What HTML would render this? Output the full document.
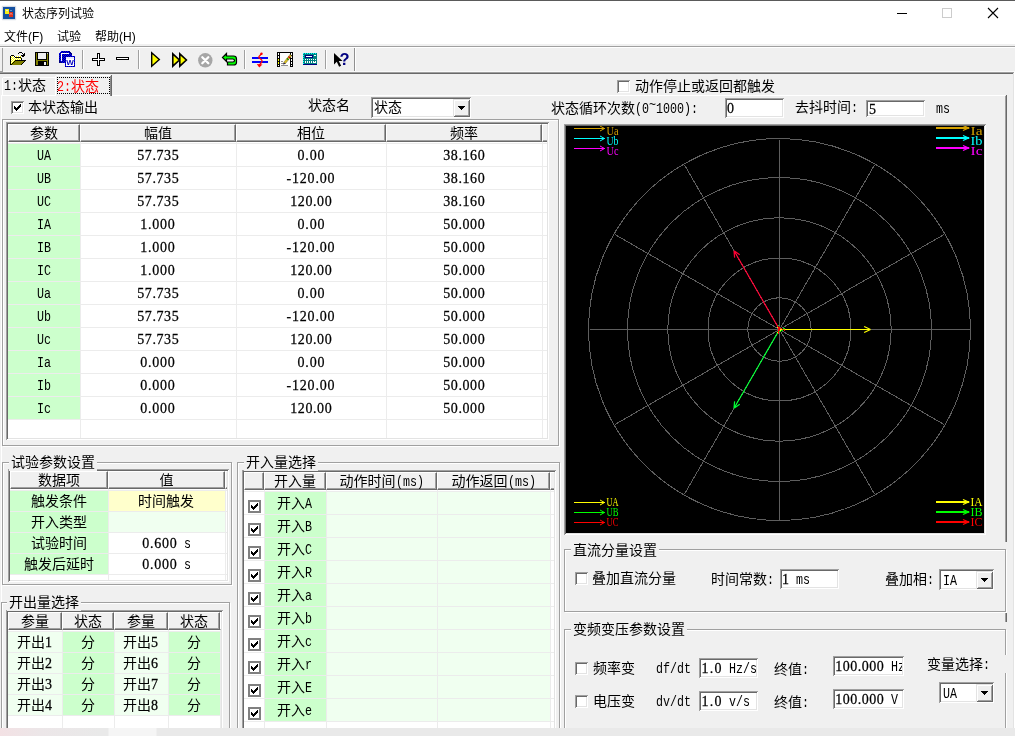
<!DOCTYPE html>
<html lang="zh-CN"><head><meta charset="utf-8"><title>状态序列试验</title>
<style>
html,body{margin:0;padding:0;background:#f0f0f0;overflow:hidden}
#win{position:relative;width:1015px;height:736px;background:#f0f0f0;overflow:hidden;font:14px/14px "Liberation Mono","Noto Sans CJK SC",monospace;color:#000;will-change:transform}
#win div,#win i,#win svg.a{position:absolute;display:block}
.t{white-space:pre;font:14px/14px "Liberation Mono","Noto Sans CJK SC",monospace}
.s{white-space:pre;font:12px/14px "Liberation Sans","Noto Sans CJK SC",sans-serif}
.l{display:inline-block;transform:scaleX(.8333);transform-origin:0 50%;white-space:pre}
.gb{box-sizing:border-box;border:1px solid #a0a0a0;box-shadow:1px 1px 0 #fff,inset 1px 1px 0 #fff}
.hd{box-sizing:border-box;background:#f0f0f0;border-top:1px solid #fff;border-left:1px solid #fff;border-right:1px solid #696969;border-bottom:1px solid #696969;box-shadow:inset -1px -1px 0 #a0a0a0;text-align:center;white-space:pre;font:14px/14px "Liberation Mono","Noto Sans CJK SC",monospace;overflow:hidden;padding-top:2px}
.cb{width:13px;height:13px;box-sizing:border-box;background:#fff;box-shadow:inset 1px 1px 0 #a0a0a0,inset -1px -1px 0 #fff,inset 2px 2px 0 #696969,inset -2px -2px 0 #e3e3e3}
.cbf{width:13px;height:13px;box-sizing:border-box;background:#fff;box-shadow:inset 0 0 0 2px #808080}
.btn{box-sizing:border-box;background:#f0f0f0;box-shadow:inset 1px 1px 0 #e3e3e3,inset -1px -1px 0 #696969,inset 2px 2px 0 #fff,inset -2px -2px 0 #a0a0a0}
.c{text-align:center;white-space:pre}
.n{-webkit-text-stroke:.25px #000;display:inline-block;transform:scaleY(1.08);transform-origin:0 84%;font-family:"Liberation Serif","Noto Sans CJK SC",serif;white-space:pre}

</style></head><body>
<div id="win">
<div style="left:0px;top:0px;width:1015px;height:44px;background:#fff"></div>
<i style="left:0px;top:0px;width:1015px;height:1px;background:#5a5a5a"></i>
<svg class="a" style="left:1px;top:5px" width="16" height="16" viewBox="0 0 16 16"><rect x="0.5" y="0.5" width="15" height="15" rx="1.5" fill="#eef0f4"/><rect x="1" y="1" width="14" height="14" rx="1" fill="#d5dae3"/><rect x="2" y="2" width="12" height="12" fill="#1450a0"/><rect x="4" y="4" width="4" height="5" fill="#f6ee18"/><rect x="8" y="7" width="4" height="5" fill="#e0301c"/><path d="M5 5.500h2M9.500 5l1 1M9 9.500l1-1 1 1" stroke="#e8f0ff" stroke-width=".8" fill="none"/></svg>
<div class="s" style="left:22px;top:7px">状态序列试验</div>
<i style="left:897px;top:13px;width:10px;height:1px;background:#000"></i>
<div style="left:942px;top:8px;width:10px;height:10px;border:1px solid #ccc;box-sizing:border-box"></div>
<svg class="a" style="left:987px;top:7px" width="12" height="12" viewBox="0 0 12 12"><path d="M1 1l10 10M11 1L1 11" stroke="#000" stroke-width="1.1" fill="none"/></svg>
<div class="s" style="left:4px;top:30px">文件(F)</div>
<div class="s" style="left:57px;top:30px">试验</div>
<div class="s" style="left:95px;top:30px">帮助(H)</div>
<i style="left:0px;top:46px;width:1015px;height:1px;background:#a0a0a0"></i>
<i style="left:0px;top:47px;width:1015px;height:1px;background:#fff"></i>
<i style="left:0px;top:72px;width:1015px;height:1px;background:#a0a0a0"></i>
<i style="left:0px;top:73px;width:1015px;height:1px;background:#696969"></i>
<i style="left:2px;top:48px;width:1px;height:24px;background:#a0a0a0"></i>
<i style="left:0px;top:71px;width:3px;height:1px;background:#a0a0a0"></i>
<i style="left:3px;top:71px;width:1012px;height:1px;background:#fafafa"></i>
<i style="left:354px;top:48px;width:1px;height:23px;background:#909090"></i>
<i style="left:355px;top:48px;width:1px;height:23px;background:#fff"></i>
<i style="left:82px;top:50px;width:1px;height:19px;background:#a0a0a0"></i>
<i style="left:83px;top:50px;width:1px;height:19px;background:#fff"></i>
<i style="left:138px;top:50px;width:1px;height:19px;background:#a0a0a0"></i>
<i style="left:139px;top:50px;width:1px;height:19px;background:#fff"></i>
<i style="left:244px;top:50px;width:1px;height:19px;background:#a0a0a0"></i>
<i style="left:245px;top:50px;width:1px;height:19px;background:#fff"></i>
<i style="left:325px;top:50px;width:1px;height:19px;background:#a0a0a0"></i>
<i style="left:326px;top:50px;width:1px;height:19px;background:#fff"></i>
<svg class="a" style="left:10px;top:52px" width="16" height="13" viewBox="0 0 16 13" shape-rendering="crispEdges"><path d="M1 4h10v8h-10z" fill="#ffffff"/><rect x="2" y="4" width="1" height="1" fill="#ffff00"/><rect x="4" y="4" width="1" height="1" fill="#ffff00"/><rect x="6" y="4" width="1" height="1" fill="#ffff00"/><rect x="8" y="4" width="1" height="1" fill="#ffff00"/><rect x="10" y="4" width="1" height="1" fill="#ffff00"/><rect x="1" y="5" width="1" height="1" fill="#ffff00"/><rect x="3" y="5" width="1" height="1" fill="#ffff00"/><rect x="5" y="5" width="1" height="1" fill="#ffff00"/><rect x="7" y="5" width="1" height="1" fill="#ffff00"/><rect x="9" y="5" width="1" height="1" fill="#ffff00"/><rect x="2" y="6" width="1" height="1" fill="#ffff00"/><rect x="4" y="6" width="1" height="1" fill="#ffff00"/><rect x="6" y="6" width="1" height="1" fill="#ffff00"/><rect x="8" y="6" width="1" height="1" fill="#ffff00"/><rect x="10" y="6" width="1" height="1" fill="#ffff00"/><rect x="1" y="7" width="1" height="1" fill="#ffff00"/><rect x="3" y="7" width="1" height="1" fill="#ffff00"/><rect x="5" y="7" width="1" height="1" fill="#ffff00"/><rect x="7" y="7" width="1" height="1" fill="#ffff00"/><rect x="9" y="7" width="1" height="1" fill="#ffff00"/><rect x="2" y="8" width="1" height="1" fill="#ffff00"/><rect x="4" y="8" width="1" height="1" fill="#ffff00"/><rect x="6" y="8" width="1" height="1" fill="#ffff00"/><rect x="8" y="8" width="1" height="1" fill="#ffff00"/><rect x="10" y="8" width="1" height="1" fill="#ffff00"/><rect x="1" y="9" width="1" height="1" fill="#ffff00"/><rect x="3" y="9" width="1" height="1" fill="#ffff00"/><rect x="5" y="9" width="1" height="1" fill="#ffff00"/><rect x="7" y="9" width="1" height="1" fill="#ffff00"/><rect x="9" y="9" width="1" height="1" fill="#ffff00"/><rect x="2" y="10" width="1" height="1" fill="#ffff00"/><rect x="4" y="10" width="1" height="1" fill="#ffff00"/><rect x="6" y="10" width="1" height="1" fill="#ffff00"/><rect x="8" y="10" width="1" height="1" fill="#ffff00"/><rect x="10" y="10" width="1" height="1" fill="#ffff00"/><rect x="1" y="11" width="1" height="1" fill="#ffff00"/><rect x="3" y="11" width="1" height="1" fill="#ffff00"/><rect x="5" y="11" width="1" height="1" fill="#ffff00"/><rect x="7" y="11" width="1" height="1" fill="#ffff00"/><rect x="9" y="11" width="1" height="1" fill="#ffff00"/><path d="M1 3h3v1h-3zM0 4h1v9h-1zM4 4h1v1h-1zM5 5h6v1h-6zM11 6h1v2h-1zM0 12h11v1h-11z" fill="#000"/><path d="M5 8h11l-5 5h-10z" fill="#808000"/><path d="M5 8h11v1h-11zM14 9h1v1h-1zM13 10h1v1h-1zM12 11h1v1h-1zM11 12h1v1h-1zM4 9h1v1h-1zM3 10h1v1h-1zM2 11h1v1h-1zM1 12h1v1h-1z" fill="#000"/><path d="M9 0h3v1h-3zM8 1h1v1h-1zM12 1h1v1h-1zM13 2h1v2h-1zM11 3h4v1h-4zM14 1h1v2h-1zM12 4h2v1h-2z" fill="#000"/></svg>
<svg class="a" style="left:35px;top:52px" width="14" height="14" viewBox="0 0 14 14" shape-rendering="crispEdges"><path d="M0 0h14v14h-14z" fill="#000"/><path d="M1 1h12v12h-12z" fill="#808000"/><path d="M3 1h8v6h-8z" fill="#f0f0f0"/><path d="M2 1h1v7h-1zM11 1h1v7h-1zM2 7h10v1h-10z" fill="#000"/><path d="M3 9h9v4h-9z" fill="#000"/><path d="M9 10h2v3h-2z" fill="#f0f0f0"/><path d="M12 1h1v1h-1z" fill="#c0c0c0"/></svg>
<svg class="a" style="left:59px;top:51px" width="16" height="16" viewBox="0 0 16 16" shape-rendering="crispEdges"><path d="M2 0h8l3 3v9h-13v-10z" fill="#000080"/><rect x="2" y="0" width="1" height="1" fill="#0000ff"/><rect x="4" y="0" width="1" height="1" fill="#0000ff"/><rect x="6" y="0" width="1" height="1" fill="#0000ff"/><rect x="8" y="0" width="1" height="1" fill="#0000ff"/><rect x="1" y="1" width="1" height="1" fill="#0000ff"/><rect x="3" y="1" width="1" height="1" fill="#0000ff"/><rect x="5" y="1" width="1" height="1" fill="#0000ff"/><rect x="7" y="1" width="1" height="1" fill="#0000ff"/><rect x="9" y="1" width="1" height="1" fill="#0000ff"/><rect x="0" y="2" width="1" height="1" fill="#0000ff"/><rect x="2" y="2" width="1" height="1" fill="#0000ff"/><rect x="4" y="2" width="1" height="1" fill="#0000ff"/><rect x="6" y="2" width="1" height="1" fill="#0000ff"/><rect x="8" y="2" width="1" height="1" fill="#0000ff"/><rect x="10" y="2" width="1" height="1" fill="#0000ff"/><rect x="1" y="3" width="1" height="1" fill="#0000ff"/><rect x="3" y="3" width="1" height="1" fill="#0000ff"/><rect x="5" y="3" width="1" height="1" fill="#0000ff"/><rect x="7" y="3" width="1" height="1" fill="#0000ff"/><rect x="9" y="3" width="1" height="1" fill="#0000ff"/><rect x="11" y="3" width="1" height="1" fill="#0000ff"/><rect x="0" y="4" width="1" height="1" fill="#0000ff"/><rect x="2" y="4" width="1" height="1" fill="#0000ff"/><rect x="4" y="4" width="1" height="1" fill="#0000ff"/><rect x="6" y="4" width="1" height="1" fill="#0000ff"/><rect x="8" y="4" width="1" height="1" fill="#0000ff"/><rect x="10" y="4" width="1" height="1" fill="#0000ff"/><rect x="12" y="4" width="1" height="1" fill="#0000ff"/><rect x="1" y="5" width="1" height="1" fill="#0000ff"/><rect x="3" y="5" width="1" height="1" fill="#0000ff"/><rect x="5" y="5" width="1" height="1" fill="#0000ff"/><rect x="7" y="5" width="1" height="1" fill="#0000ff"/><rect x="9" y="5" width="1" height="1" fill="#0000ff"/><rect x="11" y="5" width="1" height="1" fill="#0000ff"/><rect x="0" y="6" width="1" height="1" fill="#0000ff"/><rect x="2" y="6" width="1" height="1" fill="#0000ff"/><rect x="4" y="6" width="1" height="1" fill="#0000ff"/><rect x="6" y="6" width="1" height="1" fill="#0000ff"/><rect x="8" y="6" width="1" height="1" fill="#0000ff"/><rect x="10" y="6" width="1" height="1" fill="#0000ff"/><rect x="12" y="6" width="1" height="1" fill="#0000ff"/><rect x="1" y="7" width="1" height="1" fill="#0000ff"/><rect x="3" y="7" width="1" height="1" fill="#0000ff"/><rect x="5" y="7" width="1" height="1" fill="#0000ff"/><rect x="7" y="7" width="1" height="1" fill="#0000ff"/><rect x="9" y="7" width="1" height="1" fill="#0000ff"/><rect x="11" y="7" width="1" height="1" fill="#0000ff"/><rect x="0" y="8" width="1" height="1" fill="#0000ff"/><rect x="2" y="8" width="1" height="1" fill="#0000ff"/><rect x="4" y="8" width="1" height="1" fill="#0000ff"/><rect x="6" y="8" width="1" height="1" fill="#0000ff"/><rect x="8" y="8" width="1" height="1" fill="#0000ff"/><rect x="10" y="8" width="1" height="1" fill="#0000ff"/><rect x="12" y="8" width="1" height="1" fill="#0000ff"/><rect x="1" y="9" width="1" height="1" fill="#0000ff"/><rect x="3" y="9" width="1" height="1" fill="#0000ff"/><rect x="5" y="9" width="1" height="1" fill="#0000ff"/><rect x="7" y="9" width="1" height="1" fill="#0000ff"/><rect x="9" y="9" width="1" height="1" fill="#0000ff"/><rect x="11" y="9" width="1" height="1" fill="#0000ff"/><rect x="2" y="10" width="1" height="1" fill="#0000ff"/><rect x="4" y="10" width="1" height="1" fill="#0000ff"/><rect x="6" y="10" width="1" height="1" fill="#0000ff"/><rect x="8" y="10" width="1" height="1" fill="#0000ff"/><rect x="10" y="10" width="1" height="1" fill="#0000ff"/><rect x="12" y="10" width="1" height="1" fill="#0000ff"/><rect x="3" y="11" width="1" height="1" fill="#0000ff"/><rect x="5" y="11" width="1" height="1" fill="#0000ff"/><rect x="7" y="11" width="1" height="1" fill="#0000ff"/><rect x="9" y="11" width="1" height="1" fill="#0000ff"/><rect x="11" y="11" width="1" height="1" fill="#0000ff"/><path d="M2 2h8v1h-8zM2 2h1v8h-1z" fill="#ffffff"/><path d="M6 5h10v11h-10z" fill="#0000ff"/><path d="M7 6h8v9h-8z" fill="#ffffff"/><path d="M7 6h8v2h-8z" fill="#e8e8ff"/><rect x="6" y="5" width="1" height="1" fill="#000080"/><rect x="8" y="5" width="1" height="1" fill="#000080"/><rect x="10" y="5" width="1" height="1" fill="#000080"/><rect x="12" y="5" width="1" height="1" fill="#000080"/><rect x="14" y="5" width="1" height="1" fill="#000080"/><rect x="15" y="6" width="1" height="1" fill="#000080"/><rect x="15" y="8" width="1" height="1" fill="#000080"/><rect x="15" y="10" width="1" height="1" fill="#000080"/><rect x="15" y="12" width="1" height="1" fill="#000080"/><rect x="15" y="14" width="1" height="1" fill="#000080"/><rect x="6" y="7" width="1" height="1" fill="#000080"/><rect x="6" y="9" width="1" height="1" fill="#000080"/><rect x="6" y="11" width="1" height="1" fill="#000080"/><rect x="6" y="13" width="1" height="1" fill="#000080"/><rect x="6" y="15" width="1" height="1" fill="#000080"/><rect x="8" y="15" width="1" height="1" fill="#000080"/><rect x="10" y="15" width="1" height="1" fill="#000080"/><rect x="12" y="15" width="1" height="1" fill="#000080"/><rect x="14" y="15" width="1" height="1" fill="#000080"/><text x="11" y="14" text-anchor="middle" font-family="Liberation Sans,sans-serif" font-weight="bold" font-size="8" fill="#0000c0" shape-rendering="auto">W</text></svg>
<svg class="a" style="left:92px;top:53px" width="13" height="13" viewBox="0 0 13 13" shape-rendering="crispEdges"><path d="M5 0h3v13h-3zM0 5h13v3h-13z" fill="#000"/><path d="M6 1h1v11h-1zM1 6h11v1h-11z" fill="#fff"/></svg>
<svg class="a" style="left:116px;top:57px" width="13" height="3" viewBox="0 0 13 3" shape-rendering="crispEdges"><path d="M0 0h13v3h-13z" fill="#000"/><path d="M1 1h11v1h-11z" fill="#fff"/></svg>
<svg class="a" style="left:150px;top:51px" width="12" height="17" viewBox="0 0 12 17"><path d="M1.7 1.8v13.4l7.6-6.7z" fill="#ffff00" stroke="#000" stroke-width="1.4" stroke-linejoin="miter"/></svg>
<svg class="a" style="left:171px;top:52px" width="18" height="16" viewBox="0 0 18 16"><path d="M1.8 1.8v12.4l6.6-6.2z" fill="#ffff00" stroke="#000" stroke-width="1.6"/><path d="M8.8 1.8v12.4l6.6-6.2z" fill="#ffff00" stroke="#000" stroke-width="1.6"/></svg>
<svg class="a" style="left:197px;top:52px" width="17" height="17" viewBox="0 0 17 17"><circle cx="8.3" cy="8.3" r="7.2" fill="#a6a6a6"/><path d="M5.3 5.3l6 6M11.3 5.3l-6 6" stroke="#fff" stroke-width="2.3" stroke-linecap="round"/></svg>
<svg class="a" style="left:221px;top:52px" width="17" height="15" viewBox="0 0 17 15"><path d="M5.5 1.5L1.5 5.5 5.5 9.5V7h6.2c1.2 0 1.8 .5 1.8 1.5s-.6 1.5-1.8 1.5H6.5v3h6c2 0 3-1 3-2.500V7c0-2-1-3-3-3H5.500z" fill="#00ff00" stroke="#000" stroke-width="1.2" stroke-linejoin="miter"/></svg>
<svg class="a" style="left:251px;top:52px" width="18" height="16" viewBox="0 0 18 16"><path d="M1 5h16v2h-16zM1 9h16v2h-16z" fill="#0000ff"/><path d="M10.5 1.5c-.3 1.500-2.500 2-2.700 3.500s3.500 2 3.300 4-2.500 2.500-2.800 5" stroke="#ff0000" stroke-width="1.300" fill="none"/><circle cx="10.500" cy="1.700" r="1.200" fill="#ff0000"/><path d="M5.800 12l2.400 3.500 3.300-3z" fill="#ff0000"/></svg>
<svg class="a" style="left:277px;top:52px" width="16" height="15" viewBox="0 0 16 15" shape-rendering="crispEdges"><path d="M0 0h16v1h-16zM0 0h1v15h-1zM2 0h1v15h-1zM13 0h1v15h-1zM15 0h1v15h-1zM1 0h1v1h-1zM14 0h1v1h-1z" fill="#000"/><path d="M3 1h10v13h-10z" fill="#fff"/><path d="M1 1h1v14h-1zM14 1h1v14h-1z" fill="#000"/><path d="M1 1h1v2h-1zM1 4h1v2h-1zM14 1h1v2h-1zM14 4h1v2h-1zM14 7h1v2h-1zM14 10h1v2h-1zM14 13h1v1h-1zM1 13h1v1h-1z" fill="#fff"/><path d="M1 7h1v2h-1zM1 10h1v2h-1z" fill="#ffff00"/><path d="M3 14h10v1h-10z" fill="#f0f0f0"/><path d="M4 9h2v1h-2zM4 11h5v1h-5zM4 13h7v1h-7z" fill="#909090"/><path d="M13 2.500l1.500 1.500-6 7.500-2.200 .8 .7-2.300z" fill="#d8c020" stroke="#807030" stroke-width=".5" shape-rendering="auto"/><path d="M11.500 4.500l1.500 1.500" stroke="#c00000" stroke-width="1.200" shape-rendering="auto"/><path d="M10 6.300l1.500 1.500" stroke="#008000" stroke-width="1.200" shape-rendering="auto"/><path d="M7 10.500l1.200 1.200-1.900 .6z" fill="#000080" shape-rendering="auto"/></svg>
<svg class="a" style="left:303px;top:53px" width="14" height="12" viewBox="0 0 14 12" shape-rendering="crispEdges"><path d="M0 0h14v12h-14z" fill="#008080"/><path d="M0 11h14v1h-14z" fill="#000080"/><rect x="0" y="0" width="1" height="1" fill="#00ffff"/><rect x="2" y="0" width="1" height="1" fill="#00ffff"/><rect x="4" y="0" width="1" height="1" fill="#00ffff"/><rect x="6" y="0" width="1" height="1" fill="#00ffff"/><rect x="8" y="0" width="1" height="1" fill="#00ffff"/><rect x="10" y="0" width="1" height="1" fill="#00ffff"/><rect x="12" y="0" width="1" height="1" fill="#00ffff"/><rect x="0" y="0" width="1" height="1" fill="#00ffff"/><rect x="0" y="2" width="1" height="1" fill="#00ffff"/><rect x="0" y="4" width="1" height="1" fill="#00ffff"/><rect x="0" y="6" width="1" height="1" fill="#00ffff"/><rect x="0" y="8" width="1" height="1" fill="#00ffff"/><rect x="0" y="10" width="1" height="1" fill="#00ffff"/><path d="M2 2h8v3h-8z" fill="#000080"/><path d="M3 3h6v1h-6z" fill="#fff"/><path d="M11 2h2v1h-2z" fill="#fff"/><rect x="2" y="6" width="1" height="1" fill="#fff"/><rect x="4" y="6" width="1" height="1" fill="#fff"/><rect x="6" y="6" width="1" height="1" fill="#fff"/><rect x="8" y="6" width="1" height="1" fill="#fff"/><rect x="10" y="6" width="1" height="1" fill="#fff"/><rect x="12" y="6" width="1" height="1" fill="#fff"/><rect x="2" y="8" width="1" height="1" fill="#fff"/><rect x="4" y="8" width="1" height="1" fill="#fff"/><rect x="6" y="8" width="1" height="1" fill="#fff"/><rect x="8" y="8" width="1" height="1" fill="#fff"/><rect x="10" y="8" width="1" height="1" fill="#fff"/><rect x="12" y="8" width="1" height="1" fill="#fff"/><path d="M2 9h1v1h-1zM4 9h1v1h-1zM6 9h1v1h-1zM8 9h1v1h-1zM10 9h3v1h-3z" fill="#fff"/></svg>
<svg class="a" style="left:333px;top:52px" width="18" height="16" viewBox="0 0 18 16"><path d="M1 1v11.500l2.800-2.700 2.300 5 2-1-2.300-4.800h3.700z" fill="#000"/><text x="6.500" y="13" font-family="Liberation Sans,sans-serif" font-weight="bold" font-size="16.500" fill="#000080">?</text></svg>
<i style="left:2px;top:78px;width:1px;height:17px;background:#fff"></i>
<i style="left:3px;top:77px;width:52px;height:1px;background:#fff"></i>
<div class="t" style="left:4px;top:79px;"><span class="l" style="width:14px">1:</span>状态</div>
<i style="left:55px;top:76px;width:1px;height:20px;background:#fff"></i>
<i style="left:56px;top:75px;width:54px;height:1px;background:#fff"></i>
<i style="left:110px;top:76px;width:1px;height:20px;background:#8c8c8c"></i>
<i style="left:111px;top:75px;width:1px;height:21px;background:#696969"></i>
<div class="t" style="left:57px;top:80px;color:#f00"><span class="l" style="width:14px">2:</span>状态</div>
<div style="left:57px;top:77px;width:53px;height:17px;border:1px dotted #000;box-sizing:border-box"></div>
<i style="left:1px;top:95px;width:54px;height:1px;background:#fff"></i>
<i style="left:112px;top:95px;width:893px;height:1px;background:#fff"></i>
<i style="left:1px;top:96px;width:1px;height:632px;background:#fff"></i>
<i style="left:1006px;top:95px;width:1px;height:447px;background:#696969"></i>
<i style="left:1005px;top:96px;width:1px;height:446px;background:#a0a0a0"></i>
<i style="left:1014px;top:72px;width:1px;height:664px;background:#fff"></i>
<i style="left:1013px;top:73px;width:1px;height:663px;background:#e3e3e3"></i>
<div class="cb" style="left:11px;top:101px"><svg width="13" height="13" viewBox="0 0 13 13" style="position:absolute;left:0;top:0" shape-rendering="crispEdges"><path d="M3 5h1v1h1v1h1v-1h1v-1h1v-1h1v-1h1v3h-1v1h-1v1h-1v1h-1v1h-1v-1h-1v-1h-1z" fill="#000"/></svg></div>
<div class="t" style="left:28px;top:101px;">本状态输出</div>
<div class="t" style="left:308px;top:99px;">状态名</div>
<div style="left:371px;top:97px;width:100px;height:21px;background:#fff;box-shadow:inset 1px 1px 0 #a0a0a0,inset -1px -1px 0 #fff,inset 2px 2px 0 #696969,inset -2px -2px 0 #e3e3e3"></div>
<div class="t" style="left:374px;top:101px;">状态</div>
<div class="btn" style="left:453px;top:99px;width:17px;height:18px"><svg width="17" height="18" style="position:absolute;left:0;top:0" shape-rendering="crispEdges"><path d="M5 7h7v1h-1v1h-1v1h-1v1h-1v-1h-1v-1h-1v-1h-1z" fill="#000"/></svg></div>
<div class="gb" style="left:2px;top:119px;width:557px;height:327px"></div>
<div style="left:6px;top:122px;width:543px;height:318px;background:#fff;box-shadow:inset 1px 1px 0 #a0a0a0,inset -1px -1px 0 #fff,inset 2px 2px 0 #696969,inset -2px -2px 0 #e3e3e3"></div>
<div style="left:8px;top:144px;width:72px;height:22px;background:#ccffcc"></div>
<div class="t" style="left:37px;top:149px;"><span class="l" style="width:14px">UA</span></div>
<div class="t" style="left:137px;top:149px;"><span class="n" style="letter-spacing:0.58px;margin:0 -0.29px 0 0.29px">57.735</span></div>
<div class="t" style="left:297px;top:149px;"><span class="n" style="letter-spacing:0.88px;margin:0 -0.44px 0 0.44px">0.00</span></div>
<div class="t" style="left:443px;top:149px;"><span class="n" style="letter-spacing:0.58px;margin:0 -0.29px 0 0.29px">38.160</span></div>
<div style="left:8px;top:167px;width:72px;height:22px;background:#ccffcc"></div>
<div class="t" style="left:37px;top:172px;"><span class="l" style="width:14px">UB</span></div>
<div class="t" style="left:137px;top:172px;"><span class="n" style="letter-spacing:0.58px;margin:0 -0.29px 0 0.29px">57.735</span></div>
<div class="t" style="left:286px;top:172px;"><span class="n" style="letter-spacing:0.83px;margin:0 -0.42px 0 0.42px">-120.00</span></div>
<div class="t" style="left:443px;top:172px;"><span class="n" style="letter-spacing:0.58px;margin:0 -0.29px 0 0.29px">38.160</span></div>
<div style="left:8px;top:190px;width:72px;height:22px;background:#ccffcc"></div>
<div class="t" style="left:37px;top:195px;"><span class="l" style="width:14px">UC</span></div>
<div class="t" style="left:137px;top:195px;"><span class="n" style="letter-spacing:0.58px;margin:0 -0.29px 0 0.29px">57.735</span></div>
<div class="t" style="left:290px;top:195px;"><span class="n" style="letter-spacing:0.58px;margin:0 -0.29px 0 0.29px">120.00</span></div>
<div class="t" style="left:443px;top:195px;"><span class="n" style="letter-spacing:0.58px;margin:0 -0.29px 0 0.29px">38.160</span></div>
<div style="left:8px;top:213px;width:72px;height:22px;background:#ccffcc"></div>
<div class="t" style="left:37px;top:218px;"><span class="l" style="width:14px">IA</span></div>
<div class="t" style="left:140px;top:218px;"><span class="n" style="letter-spacing:0.70px;margin:0 -0.35px 0 0.35px">1.000</span></div>
<div class="t" style="left:297px;top:218px;"><span class="n" style="letter-spacing:0.88px;margin:0 -0.44px 0 0.44px">0.00</span></div>
<div class="t" style="left:443px;top:218px;"><span class="n" style="letter-spacing:0.58px;margin:0 -0.29px 0 0.29px">50.000</span></div>
<div style="left:8px;top:236px;width:72px;height:22px;background:#ccffcc"></div>
<div class="t" style="left:37px;top:241px;"><span class="l" style="width:14px">IB</span></div>
<div class="t" style="left:140px;top:241px;"><span class="n" style="letter-spacing:0.70px;margin:0 -0.35px 0 0.35px">1.000</span></div>
<div class="t" style="left:286px;top:241px;"><span class="n" style="letter-spacing:0.83px;margin:0 -0.42px 0 0.42px">-120.00</span></div>
<div class="t" style="left:443px;top:241px;"><span class="n" style="letter-spacing:0.58px;margin:0 -0.29px 0 0.29px">50.000</span></div>
<div style="left:8px;top:259px;width:72px;height:22px;background:#ccffcc"></div>
<div class="t" style="left:37px;top:264px;"><span class="l" style="width:14px">IC</span></div>
<div class="t" style="left:140px;top:264px;"><span class="n" style="letter-spacing:0.70px;margin:0 -0.35px 0 0.35px">1.000</span></div>
<div class="t" style="left:290px;top:264px;"><span class="n" style="letter-spacing:0.58px;margin:0 -0.29px 0 0.29px">120.00</span></div>
<div class="t" style="left:443px;top:264px;"><span class="n" style="letter-spacing:0.58px;margin:0 -0.29px 0 0.29px">50.000</span></div>
<div style="left:8px;top:282px;width:72px;height:22px;background:#ccffcc"></div>
<div class="t" style="left:37px;top:287px;"><span class="l" style="width:14px">Ua</span></div>
<div class="t" style="left:137px;top:287px;"><span class="n" style="letter-spacing:0.58px;margin:0 -0.29px 0 0.29px">57.735</span></div>
<div class="t" style="left:297px;top:287px;"><span class="n" style="letter-spacing:0.88px;margin:0 -0.44px 0 0.44px">0.00</span></div>
<div class="t" style="left:443px;top:287px;"><span class="n" style="letter-spacing:0.58px;margin:0 -0.29px 0 0.29px">50.000</span></div>
<div style="left:8px;top:305px;width:72px;height:22px;background:#ccffcc"></div>
<div class="t" style="left:37px;top:310px;"><span class="l" style="width:14px">Ub</span></div>
<div class="t" style="left:137px;top:310px;"><span class="n" style="letter-spacing:0.58px;margin:0 -0.29px 0 0.29px">57.735</span></div>
<div class="t" style="left:286px;top:310px;"><span class="n" style="letter-spacing:0.83px;margin:0 -0.42px 0 0.42px">-120.00</span></div>
<div class="t" style="left:443px;top:310px;"><span class="n" style="letter-spacing:0.58px;margin:0 -0.29px 0 0.29px">50.000</span></div>
<div style="left:8px;top:328px;width:72px;height:22px;background:#ccffcc"></div>
<div class="t" style="left:37px;top:333px;"><span class="l" style="width:14px">Uc</span></div>
<div class="t" style="left:137px;top:333px;"><span class="n" style="letter-spacing:0.58px;margin:0 -0.29px 0 0.29px">57.735</span></div>
<div class="t" style="left:290px;top:333px;"><span class="n" style="letter-spacing:0.58px;margin:0 -0.29px 0 0.29px">120.00</span></div>
<div class="t" style="left:443px;top:333px;"><span class="n" style="letter-spacing:0.58px;margin:0 -0.29px 0 0.29px">50.000</span></div>
<div style="left:8px;top:351px;width:72px;height:22px;background:#ccffcc"></div>
<div class="t" style="left:37px;top:356px;"><span class="l" style="width:14px">Ia</span></div>
<div class="t" style="left:140px;top:356px;"><span class="n" style="letter-spacing:0.70px;margin:0 -0.35px 0 0.35px">0.000</span></div>
<div class="t" style="left:297px;top:356px;"><span class="n" style="letter-spacing:0.88px;margin:0 -0.44px 0 0.44px">0.00</span></div>
<div class="t" style="left:443px;top:356px;"><span class="n" style="letter-spacing:0.58px;margin:0 -0.29px 0 0.29px">50.000</span></div>
<div style="left:8px;top:374px;width:72px;height:22px;background:#ccffcc"></div>
<div class="t" style="left:37px;top:379px;"><span class="l" style="width:14px">Ib</span></div>
<div class="t" style="left:140px;top:379px;"><span class="n" style="letter-spacing:0.70px;margin:0 -0.35px 0 0.35px">0.000</span></div>
<div class="t" style="left:286px;top:379px;"><span class="n" style="letter-spacing:0.83px;margin:0 -0.42px 0 0.42px">-120.00</span></div>
<div class="t" style="left:443px;top:379px;"><span class="n" style="letter-spacing:0.58px;margin:0 -0.29px 0 0.29px">50.000</span></div>
<div style="left:8px;top:397px;width:72px;height:22px;background:#ccffcc"></div>
<div class="t" style="left:37px;top:402px;"><span class="l" style="width:14px">Ic</span></div>
<div class="t" style="left:140px;top:402px;"><span class="n" style="letter-spacing:0.70px;margin:0 -0.35px 0 0.35px">0.000</span></div>
<div class="t" style="left:290px;top:402px;"><span class="n" style="letter-spacing:0.58px;margin:0 -0.29px 0 0.29px">120.00</span></div>
<div class="t" style="left:443px;top:402px;"><span class="n" style="letter-spacing:0.58px;margin:0 -0.29px 0 0.29px">50.000</span></div>
<i style="left:8px;top:143px;width:539px;height:1px;background:#ececec"></i>
<i style="left:8px;top:166px;width:539px;height:1px;background:#ececec"></i>
<i style="left:8px;top:189px;width:539px;height:1px;background:#ececec"></i>
<i style="left:8px;top:212px;width:539px;height:1px;background:#ececec"></i>
<i style="left:8px;top:235px;width:539px;height:1px;background:#ececec"></i>
<i style="left:8px;top:258px;width:539px;height:1px;background:#ececec"></i>
<i style="left:8px;top:281px;width:539px;height:1px;background:#ececec"></i>
<i style="left:8px;top:304px;width:539px;height:1px;background:#ececec"></i>
<i style="left:8px;top:327px;width:539px;height:1px;background:#ececec"></i>
<i style="left:8px;top:350px;width:539px;height:1px;background:#ececec"></i>
<i style="left:8px;top:373px;width:539px;height:1px;background:#ececec"></i>
<i style="left:8px;top:396px;width:539px;height:1px;background:#ececec"></i>
<i style="left:8px;top:419px;width:539px;height:1px;background:#ececec"></i>
<i style="left:80px;top:142px;width:1px;height:296px;background:#ececec"></i>
<i style="left:236px;top:142px;width:1px;height:296px;background:#ececec"></i>
<i style="left:386px;top:142px;width:1px;height:296px;background:#ececec"></i>
<i style="left:542px;top:142px;width:1px;height:296px;background:#ececec"></i>
<div class="hd" style="left:8px;top:124px;width:72px;height:18px;">参数</div>
<div class="hd" style="left:80px;top:124px;width:156px;height:18px;">幅值</div>
<div class="hd" style="left:236px;top:124px;width:150px;height:18px;">相位</div>
<div class="hd" style="left:386px;top:124px;width:156px;height:18px;">频率</div>
<div style="left:542px;top:124px;width:5px;height:18px;background:#f0f0f0;border-top:1px solid #fff;border-left:1px solid #fff;border-bottom:1px solid #696969;box-sizing:border-box;box-shadow:inset 0 -1px 0 #a0a0a0"></div>
<div class="gb" style="left:2px;top:462px;width:230px;height:123px"></div>
<div style="left:8px;top:469px;width:221px;height:113px;background:#fff;box-shadow:inset 1px 1px 0 #a0a0a0,inset -1px -1px 0 #fff,inset 2px 2px 0 #696969,inset -2px -2px 0 #e3e3e3"></div>
<div style="left:10px;top:491px;width:98px;height:20px;background:#ccffcc"></div>
<div class="t" style="left:31px;top:495px;">触发条件</div>
<div style="left:109px;top:491px;width:116px;height:20px;background:#ffffcc"></div>
<div class="t" style="left:138px;top:495px;">时间触发</div>
<div style="left:10px;top:512px;width:98px;height:20px;background:#ccffcc"></div>
<div class="t" style="left:31px;top:516px;">开入类型</div>
<div style="left:109px;top:512px;width:116px;height:20px;background:#f0fff0"></div>
<div style="left:10px;top:533px;width:98px;height:20px;background:#ccffcc"></div>
<div class="t" style="left:31px;top:537px;">试验时间</div>
<div class="t" style="left:142px;top:537px;"><span class="n" style="letter-spacing:0.70px;margin:0 -0.35px 0 0.35px">0.600</span><span class="l" style="width:14px"> s</span></div>
<div style="left:10px;top:554px;width:98px;height:20px;background:#ccffcc"></div>
<div class="t" style="left:24px;top:558px;">触发后延时</div>
<div class="t" style="left:142px;top:558px;"><span class="n" style="letter-spacing:0.70px;margin:0 -0.35px 0 0.35px">0.000</span><span class="l" style="width:14px"> s</span></div>
<i style="left:10px;top:490px;width:217px;height:1px;background:#ececec"></i>
<i style="left:10px;top:511px;width:217px;height:1px;background:#ececec"></i>
<i style="left:10px;top:532px;width:217px;height:1px;background:#ececec"></i>
<i style="left:10px;top:553px;width:217px;height:1px;background:#ececec"></i>
<i style="left:10px;top:574px;width:217px;height:1px;background:#ececec"></i>
<i style="left:108px;top:489px;width:1px;height:91px;background:#ececec"></i>
<i style="left:225px;top:489px;width:1px;height:91px;background:#ececec"></i>
<div class="hd" style="left:10px;top:471px;width:98px;height:18px;">数据项</div>
<div class="hd" style="left:108px;top:471px;width:117px;height:18px;">值</div>
<div style="left:225px;top:471px;width:2px;height:18px;background:#f0f0f0;border-top:1px solid #fff;border-left:1px solid #fff;border-bottom:1px solid #696969;box-sizing:border-box;box-shadow:inset 0 -1px 0 #a0a0a0"></div>
<div style="left:9px;top:455px;width:88px;height:16px;background:#f0f0f0"></div>
<div class="t" style="left:11px;top:456px;">试验参数设置</div>
<div class="gb" style="left:1px;top:602px;width:229px;height:140px"></div>
<div style="left:6px;top:610px;width:217px;height:125px;background:#fff;box-shadow:inset 1px 1px 0 #a0a0a0,inset -1px -1px 0 #fff,inset 2px 2px 0 #696969,inset -2px -2px 0 #e3e3e3"></div>
<div style="left:8px;top:632px;width:54px;height:20px;background:#f0fff0"></div>
<div class="t" style="left:17px;top:636px;">开出<span class="n" style="letter-spacing:0.00px;margin:0 -0.00px 0 0.00px">1</span></div>
<div style="left:63px;top:632px;width:51px;height:20px;background:#ccffcc"></div>
<div class="t" style="left:81px;top:636px;">分</div>
<div style="left:115px;top:632px;width:53px;height:20px;background:#f0fff0"></div>
<div class="t" style="left:123px;top:636px;">开出<span class="n" style="letter-spacing:0.00px;margin:0 -0.00px 0 0.00px">5</span></div>
<div style="left:169px;top:632px;width:51px;height:20px;background:#ccffcc"></div>
<div class="t" style="left:187px;top:636px;">分</div>
<div style="left:8px;top:653px;width:54px;height:20px;background:#f0fff0"></div>
<div class="t" style="left:17px;top:657px;">开出<span class="n" style="letter-spacing:0.00px;margin:0 -0.00px 0 0.00px">2</span></div>
<div style="left:63px;top:653px;width:51px;height:20px;background:#ccffcc"></div>
<div class="t" style="left:81px;top:657px;">分</div>
<div style="left:115px;top:653px;width:53px;height:20px;background:#f0fff0"></div>
<div class="t" style="left:123px;top:657px;">开出<span class="n" style="letter-spacing:0.00px;margin:0 -0.00px 0 0.00px">6</span></div>
<div style="left:169px;top:653px;width:51px;height:20px;background:#ccffcc"></div>
<div class="t" style="left:187px;top:657px;">分</div>
<div style="left:8px;top:674px;width:54px;height:20px;background:#f0fff0"></div>
<div class="t" style="left:17px;top:678px;">开出<span class="n" style="letter-spacing:0.00px;margin:0 -0.00px 0 0.00px">3</span></div>
<div style="left:63px;top:674px;width:51px;height:20px;background:#ccffcc"></div>
<div class="t" style="left:81px;top:678px;">分</div>
<div style="left:115px;top:674px;width:53px;height:20px;background:#f0fff0"></div>
<div class="t" style="left:123px;top:678px;">开出<span class="n" style="letter-spacing:0.00px;margin:0 -0.00px 0 0.00px">7</span></div>
<div style="left:169px;top:674px;width:51px;height:20px;background:#ccffcc"></div>
<div class="t" style="left:187px;top:678px;">分</div>
<div style="left:8px;top:695px;width:54px;height:20px;background:#f0fff0"></div>
<div class="t" style="left:17px;top:699px;">开出<span class="n" style="letter-spacing:0.00px;margin:0 -0.00px 0 0.00px">4</span></div>
<div style="left:63px;top:695px;width:51px;height:20px;background:#ccffcc"></div>
<div class="t" style="left:81px;top:699px;">分</div>
<div style="left:115px;top:695px;width:53px;height:20px;background:#f0fff0"></div>
<div class="t" style="left:123px;top:699px;">开出<span class="n" style="letter-spacing:0.00px;margin:0 -0.00px 0 0.00px">8</span></div>
<div style="left:169px;top:695px;width:51px;height:20px;background:#ccffcc"></div>
<div class="t" style="left:187px;top:699px;">分</div>
<i style="left:8px;top:631px;width:213px;height:1px;background:#ececec"></i>
<i style="left:8px;top:652px;width:213px;height:1px;background:#ececec"></i>
<i style="left:8px;top:673px;width:213px;height:1px;background:#ececec"></i>
<i style="left:8px;top:694px;width:213px;height:1px;background:#ececec"></i>
<i style="left:8px;top:715px;width:213px;height:1px;background:#ececec"></i>
<i style="left:62px;top:630px;width:1px;height:103px;background:#ececec"></i>
<i style="left:114px;top:630px;width:1px;height:103px;background:#ececec"></i>
<i style="left:168px;top:630px;width:1px;height:103px;background:#ececec"></i>
<i style="left:220px;top:630px;width:1px;height:103px;background:#ececec"></i>
<div class="hd" style="left:8px;top:612px;width:54px;height:18px;">参量</div>
<div class="hd" style="left:62px;top:612px;width:52px;height:18px;">状态</div>
<div class="hd" style="left:114px;top:612px;width:54px;height:18px;">参量</div>
<div class="hd" style="left:168px;top:612px;width:52px;height:18px;">状态</div>
<div style="left:220px;top:612px;width:1px;height:18px;background:#f0f0f0;border-top:1px solid #fff;border-left:1px solid #fff;border-bottom:1px solid #696969;box-sizing:border-box;box-shadow:inset 0 -1px 0 #a0a0a0"></div>
<div style="left:7px;top:595px;width:74px;height:16px;background:#f0f0f0"></div>
<div class="t" style="left:9px;top:596px;">开出量选择</div>
<div class="gb" style="left:237px;top:462px;width:323px;height:280px"></div>
<div style="left:242px;top:470px;width:314px;height:270px;background:#fff;box-shadow:inset 1px 1px 0 #a0a0a0,inset -1px -1px 0 #fff,inset 2px 2px 0 #696969,inset -2px -2px 0 #e3e3e3"></div>
<div style="left:265px;top:492px;width:61px;height:22px;background:#ccffcc"></div>
<div class="t" style="left:277px;top:497px;">开入<span class="l" style="width:7px">A</span></div>
<div style="left:327px;top:492px;width:110px;height:22px;background:#f0fff0"></div>
<div style="left:438px;top:492px;width:112px;height:22px;background:#f0fff0"></div>
<div style="left:265px;top:515px;width:61px;height:22px;background:#ccffcc"></div>
<div class="t" style="left:277px;top:520px;">开入<span class="l" style="width:7px">B</span></div>
<div style="left:327px;top:515px;width:110px;height:22px;background:#f0fff0"></div>
<div style="left:438px;top:515px;width:112px;height:22px;background:#f0fff0"></div>
<div style="left:265px;top:538px;width:61px;height:22px;background:#ccffcc"></div>
<div class="t" style="left:277px;top:543px;">开入<span class="l" style="width:7px">C</span></div>
<div style="left:327px;top:538px;width:110px;height:22px;background:#f0fff0"></div>
<div style="left:438px;top:538px;width:112px;height:22px;background:#f0fff0"></div>
<div style="left:265px;top:561px;width:61px;height:22px;background:#ccffcc"></div>
<div class="t" style="left:277px;top:566px;">开入<span class="l" style="width:7px">R</span></div>
<div style="left:327px;top:561px;width:110px;height:22px;background:#f0fff0"></div>
<div style="left:438px;top:561px;width:112px;height:22px;background:#f0fff0"></div>
<div style="left:265px;top:584px;width:61px;height:22px;background:#ccffcc"></div>
<div class="t" style="left:277px;top:589px;">开入<span class="l" style="width:7px">a</span></div>
<div style="left:327px;top:584px;width:110px;height:22px;background:#f0fff0"></div>
<div style="left:438px;top:584px;width:112px;height:22px;background:#f0fff0"></div>
<div style="left:265px;top:607px;width:61px;height:22px;background:#ccffcc"></div>
<div class="t" style="left:277px;top:612px;">开入<span class="l" style="width:7px">b</span></div>
<div style="left:327px;top:607px;width:110px;height:22px;background:#f0fff0"></div>
<div style="left:438px;top:607px;width:112px;height:22px;background:#f0fff0"></div>
<div style="left:265px;top:630px;width:61px;height:22px;background:#ccffcc"></div>
<div class="t" style="left:277px;top:635px;">开入<span class="l" style="width:7px">c</span></div>
<div style="left:327px;top:630px;width:110px;height:22px;background:#f0fff0"></div>
<div style="left:438px;top:630px;width:112px;height:22px;background:#f0fff0"></div>
<div style="left:265px;top:653px;width:61px;height:22px;background:#ccffcc"></div>
<div class="t" style="left:277px;top:658px;">开入<span class="l" style="width:7px">r</span></div>
<div style="left:327px;top:653px;width:110px;height:22px;background:#f0fff0"></div>
<div style="left:438px;top:653px;width:112px;height:22px;background:#f0fff0"></div>
<div style="left:265px;top:676px;width:61px;height:22px;background:#ccffcc"></div>
<div class="t" style="left:277px;top:681px;">开入<span class="l" style="width:7px">E</span></div>
<div style="left:327px;top:676px;width:110px;height:22px;background:#f0fff0"></div>
<div style="left:438px;top:676px;width:112px;height:22px;background:#f0fff0"></div>
<div style="left:265px;top:699px;width:61px;height:22px;background:#ccffcc"></div>
<div class="t" style="left:277px;top:704px;">开入<span class="l" style="width:7px">e</span></div>
<div style="left:327px;top:699px;width:110px;height:22px;background:#f0fff0"></div>
<div style="left:438px;top:699px;width:112px;height:22px;background:#f0fff0"></div>
<i style="left:244px;top:491px;width:310px;height:1px;background:#ececec"></i>
<i style="left:244px;top:514px;width:310px;height:1px;background:#ececec"></i>
<i style="left:244px;top:537px;width:310px;height:1px;background:#ececec"></i>
<i style="left:244px;top:560px;width:310px;height:1px;background:#ececec"></i>
<i style="left:244px;top:583px;width:310px;height:1px;background:#ececec"></i>
<i style="left:244px;top:606px;width:310px;height:1px;background:#ececec"></i>
<i style="left:244px;top:629px;width:310px;height:1px;background:#ececec"></i>
<i style="left:244px;top:652px;width:310px;height:1px;background:#ececec"></i>
<i style="left:244px;top:675px;width:310px;height:1px;background:#ececec"></i>
<i style="left:244px;top:698px;width:310px;height:1px;background:#ececec"></i>
<i style="left:244px;top:721px;width:310px;height:1px;background:#ececec"></i>
<i style="left:264px;top:490px;width:1px;height:248px;background:#ececec"></i>
<i style="left:326px;top:490px;width:1px;height:248px;background:#ececec"></i>
<i style="left:437px;top:490px;width:1px;height:248px;background:#ececec"></i>
<i style="left:550px;top:490px;width:1px;height:248px;background:#ececec"></i>
<div class="hd" style="left:244px;top:472px;width:20px;height:18px;"></div>
<div class="hd" style="left:264px;top:472px;width:62px;height:18px;">开入量</div>
<div class="hd" style="left:326px;top:472px;width:111px;height:18px;">动作时间<span class="l" style="width:28px">(ms)</span></div>
<div class="hd" style="left:437px;top:472px;width:113px;height:18px;">动作返回<span class="l" style="width:28px">(ms)</span></div>
<div style="left:550px;top:472px;width:4px;height:18px;background:#f0f0f0;border-top:1px solid #fff;border-left:1px solid #fff;border-bottom:1px solid #696969;box-sizing:border-box;box-shadow:inset 0 -1px 0 #a0a0a0"></div>
<div style="left:244px;top:455px;width:74px;height:16px;background:#f0f0f0"></div>
<div class="t" style="left:246px;top:456px;">开入量选择</div>
<div class="cbf" style="left:248px;top:500px"><svg width="13" height="13" viewBox="0 0 13 13" style="position:absolute;left:0;top:0" shape-rendering="crispEdges"><path d="M3 5h1v1h1v1h1v-1h1v-1h1v-1h1v-1h1v3h-1v1h-1v1h-1v1h-1v1h-1v-1h-1v-1h-1z" fill="#000"/></svg></div>
<div class="cbf" style="left:248px;top:523px"><svg width="13" height="13" viewBox="0 0 13 13" style="position:absolute;left:0;top:0" shape-rendering="crispEdges"><path d="M3 5h1v1h1v1h1v-1h1v-1h1v-1h1v-1h1v3h-1v1h-1v1h-1v1h-1v1h-1v-1h-1v-1h-1z" fill="#000"/></svg></div>
<div class="cbf" style="left:248px;top:546px"><svg width="13" height="13" viewBox="0 0 13 13" style="position:absolute;left:0;top:0" shape-rendering="crispEdges"><path d="M3 5h1v1h1v1h1v-1h1v-1h1v-1h1v-1h1v3h-1v1h-1v1h-1v1h-1v1h-1v-1h-1v-1h-1z" fill="#000"/></svg></div>
<div class="cbf" style="left:248px;top:569px"><svg width="13" height="13" viewBox="0 0 13 13" style="position:absolute;left:0;top:0" shape-rendering="crispEdges"><path d="M3 5h1v1h1v1h1v-1h1v-1h1v-1h1v-1h1v3h-1v1h-1v1h-1v1h-1v1h-1v-1h-1v-1h-1z" fill="#000"/></svg></div>
<div class="cbf" style="left:248px;top:592px"><svg width="13" height="13" viewBox="0 0 13 13" style="position:absolute;left:0;top:0" shape-rendering="crispEdges"><path d="M3 5h1v1h1v1h1v-1h1v-1h1v-1h1v-1h1v3h-1v1h-1v1h-1v1h-1v1h-1v-1h-1v-1h-1z" fill="#000"/></svg></div>
<div class="cbf" style="left:248px;top:615px"><svg width="13" height="13" viewBox="0 0 13 13" style="position:absolute;left:0;top:0" shape-rendering="crispEdges"><path d="M3 5h1v1h1v1h1v-1h1v-1h1v-1h1v-1h1v3h-1v1h-1v1h-1v1h-1v1h-1v-1h-1v-1h-1z" fill="#000"/></svg></div>
<div class="cbf" style="left:248px;top:638px"><svg width="13" height="13" viewBox="0 0 13 13" style="position:absolute;left:0;top:0" shape-rendering="crispEdges"><path d="M3 5h1v1h1v1h1v-1h1v-1h1v-1h1v-1h1v3h-1v1h-1v1h-1v1h-1v1h-1v-1h-1v-1h-1z" fill="#000"/></svg></div>
<div class="cbf" style="left:248px;top:661px"><svg width="13" height="13" viewBox="0 0 13 13" style="position:absolute;left:0;top:0" shape-rendering="crispEdges"><path d="M3 5h1v1h1v1h1v-1h1v-1h1v-1h1v-1h1v3h-1v1h-1v1h-1v1h-1v1h-1v-1h-1v-1h-1z" fill="#000"/></svg></div>
<div class="cbf" style="left:248px;top:684px"><svg width="13" height="13" viewBox="0 0 13 13" style="position:absolute;left:0;top:0" shape-rendering="crispEdges"><path d="M3 5h1v1h1v1h1v-1h1v-1h1v-1h1v-1h1v3h-1v1h-1v1h-1v1h-1v1h-1v-1h-1v-1h-1z" fill="#000"/></svg></div>
<div class="cbf" style="left:248px;top:707px"><svg width="13" height="13" viewBox="0 0 13 13" style="position:absolute;left:0;top:0" shape-rendering="crispEdges"><path d="M3 5h1v1h1v1h1v-1h1v-1h1v-1h1v-1h1v3h-1v1h-1v1h-1v1h-1v1h-1v-1h-1v-1h-1z" fill="#000"/></svg></div>
<div class="cb" style="left:617px;top:80px"></div>
<div class="t" style="left:635px;top:80px;">动作停止或返回都触发</div>
<div class="t" style="left:551px;top:102px;">状态循环次数<span class="l" style="width:63px">(0<span style="position:relative;top:-4px">~</span>1000):</span></div>
<div style="left:725px;top:98px;width:59px;height:20px;background:#fff;box-shadow:inset 1px 1px 0 #a0a0a0,inset -1px -1px 0 #fff,inset 2px 2px 0 #696969,inset -2px -2px 0 #e3e3e3"></div>
<div class="t" style="left:727px;top:102px;width:55px;overflow:hidden;height:14px"><span class="n" style="letter-spacing:0.00px;margin:0 -0.00px 0 0.00px">0</span></div>
<div class="t" style="left:795px;top:101px;">去抖时间<span class="l" style="width:7px">:</span></div>
<div style="left:866px;top:100px;width:59px;height:17px;background:#fff;box-shadow:inset 1px 1px 0 #a0a0a0,inset -1px -1px 0 #fff,inset 2px 2px 0 #696969,inset -2px -2px 0 #e3e3e3"></div>
<div class="t" style="left:869px;top:103px;width:54px;overflow:hidden;height:14px"><span class="n" style="letter-spacing:0.00px;margin:0 -0.00px 0 0.00px">5</span></div>
<div class="t" style="left:936px;top:102px;"><span class="l" style="width:14px">ms</span></div>
<div style="left:564px;top:124px;width:422px;height:411px;box-shadow:inset 1px 1px 0 #a0a0a0,inset -1px -1px 0 #fff,inset 2px 2px 0 #696969,inset -2px -2px 0 #e3e3e3"></div>
<svg class="a" style="left:566px;top:126px" width="418" height="407" viewBox="0 0 418 407"><rect x="0" y="0" width="418" height="407" fill="#000"/>
<g fill="none" stroke="#5e5e5e" stroke-width="1" shape-rendering="crispEdges"><circle cx="213.5" cy="203.5" r="31.7"/><circle cx="213.5" cy="203.5" r="71.5"/><circle cx="213.5" cy="203.5" r="111.7"/><circle cx="213.5" cy="203.5" r="152"/><circle cx="213.5" cy="203.5" r="191"/><path d="M23.50 203.50L403.50 203.50"/><path d="M48.96 108.50L378.04 298.50"/><path d="M118.50 38.96L308.50 368.04"/><path d="M213.50 13.50L213.50 393.50"/><path d="M308.50 38.96L118.50 368.04"/><path d="M378.04 108.50L48.96 298.50"/></g>
<path d="M213.50 203.50L304.50 203.50M304.50 203.50L298.16 200.54M304.50 203.50L298.16 206.46" stroke="#ffff00" stroke-width="1.2" fill="none"/>
<path d="M213.50 203.50L168.00 124.69M168.00 124.69L168.61 131.67M168.00 124.69L173.73 128.71" stroke="#ff0033" stroke-width="1.2" fill="none"/>
<path d="M213.50 203.50L168.00 282.31M168.00 282.31L173.73 278.29M168.00 282.31L168.61 275.33" stroke="#00ff33" stroke-width="1.2" fill="none"/>
<g shape-rendering="crispEdges"><rect x="212" y="201" width="2" height="4" fill="#ff0000"/><rect x="212" y="205" width="1" height="3" fill="#ff0000"/><rect x="214" y="202" width="2" height="1" fill="#ff2000"/><rect x="214" y="203" width="2" height="2" fill="#ffff00"/><rect x="213" y="205" width="2" height="1" fill="#00ff00"/><rect x="215" y="204" width="2" height="1" fill="#00e000"/><rect x="212" y="199" width="1" height="1" fill="#00ff00"/><rect x="217" y="202" width="2" height="1" fill="#00ff00"/><rect x="211" y="201" width="1" height="1" fill="#ffff00"/><rect x="211" y="206" width="1" height="1" fill="#ffff00"/><rect x="216" y="203" width="3" height="1" fill="#ff6000"/><rect x="218" y="204" width="1" height="1" fill="#ff0000"/></g>
<path d="M8 2.5H39M34 0.0L38.5 2.5L34 5.0" stroke="#d4a000" stroke-width="1" fill="none"/><text x="40.5" y="9" fill="#d4a000" font-family="Liberation Serif,serif" font-size="12" textLength="12" lengthAdjust="spacingAndGlyphs">Ua</text>
<path d="M8 12.5H39M34 10.0L38.5 12.5L34 15.0" stroke="#00ffff" stroke-width="1" fill="none"/><text x="40.5" y="19" fill="#00ffff" font-family="Liberation Serif,serif" font-size="12" textLength="12" lengthAdjust="spacingAndGlyphs">Ub</text>
<path d="M8 22.5H39M34 20.0L38.5 22.5L34 25.0" stroke="#ff00ff" stroke-width="1" fill="none"/><text x="40.5" y="29" fill="#ff00ff" font-family="Liberation Serif,serif" font-size="12" textLength="12" lengthAdjust="spacingAndGlyphs">Uc</text>
<path d="M370 2H403" stroke="#d4a000" stroke-width="2" fill="none"/><path d="M397 -0.5L402.5 2L397 4.5" stroke="#d4a000" stroke-width="1.300" fill="none"/><text x="404.5" y="9" fill="#d4a000" font-family="Liberation Serif,serif" font-size="12" textLength="12" lengthAdjust="spacingAndGlyphs">Ia</text>
<path d="M370 12H403" stroke="#00ffff" stroke-width="2" fill="none"/><path d="M397 9.5L402.5 12L397 14.5" stroke="#00ffff" stroke-width="1.300" fill="none"/><text x="404.5" y="19" fill="#00ffff" font-family="Liberation Serif,serif" font-size="12" textLength="12" lengthAdjust="spacingAndGlyphs">Ib</text>
<path d="M370 22H403" stroke="#ff00ff" stroke-width="2" fill="none"/><path d="M397 19.5L402.5 22L397 24.5" stroke="#ff00ff" stroke-width="1.300" fill="none"/><text x="404.5" y="29" fill="#ff00ff" font-family="Liberation Serif,serif" font-size="12" textLength="12" lengthAdjust="spacingAndGlyphs">Ic</text>
<path d="M8 376.5H39M34 374.0L38.5 376.5L34 379.0" stroke="#ffff00" stroke-width="1" fill="none"/><text x="40.5" y="380" fill="#ffff00" font-family="Liberation Serif,serif" font-size="12" textLength="12" lengthAdjust="spacingAndGlyphs">UA</text>
<path d="M8 386.5H39M34 384.0L38.5 386.5L34 389.0" stroke="#00ff00" stroke-width="1" fill="none"/><text x="40.5" y="390" fill="#00ff00" font-family="Liberation Serif,serif" font-size="12" textLength="12" lengthAdjust="spacingAndGlyphs">UB</text>
<path d="M8 396.5H39M34 394.0L38.5 396.5L34 399.0" stroke="#ff0000" stroke-width="1" fill="none"/><text x="40.5" y="400" fill="#ff0000" font-family="Liberation Serif,serif" font-size="12" textLength="12" lengthAdjust="spacingAndGlyphs">UC</text>
<path d="M370 376H403" stroke="#ffff00" stroke-width="2" fill="none"/><path d="M397 373.5L402.5 376L397 378.5" stroke="#ffff00" stroke-width="1.300" fill="none"/><text x="404.5" y="380" fill="#ffff00" font-family="Liberation Serif,serif" font-size="12" textLength="12" lengthAdjust="spacingAndGlyphs">IA</text>
<path d="M370 386H403" stroke="#00ff00" stroke-width="2" fill="none"/><path d="M397 383.5L402.5 386L397 388.5" stroke="#00ff00" stroke-width="1.300" fill="none"/><text x="404.5" y="390" fill="#00ff00" font-family="Liberation Serif,serif" font-size="12" textLength="12" lengthAdjust="spacingAndGlyphs">IB</text>
<path d="M370 396H403" stroke="#ff0000" stroke-width="2" fill="none"/><path d="M397 393.5L402.5 396L397 398.5" stroke="#ff0000" stroke-width="1.300" fill="none"/><text x="404.5" y="400" fill="#ff0000" font-family="Liberation Serif,serif" font-size="12" textLength="12" lengthAdjust="spacingAndGlyphs">IC</text></svg>
<div class="gb" style="left:564px;top:549px;width:442px;height:63px"></div>
<div style="left:571px;top:543px;width:88px;height:16px;background:#f0f0f0"></div>
<div class="t" style="left:573px;top:544px;">直流分量设置</div>
<div class="cb" style="left:575px;top:572px"></div>
<div class="t" style="left:592px;top:572px;">叠加直流分量</div>
<div class="t" style="left:711px;top:573px;">时间常数<span class="l" style="width:7px">:</span></div>
<div style="left:780px;top:569px;width:59px;height:20px;background:#fff;box-shadow:inset 1px 1px 0 #a0a0a0,inset -1px -1px 0 #fff,inset 2px 2px 0 #696969,inset -2px -2px 0 #e3e3e3"></div>
<div class="t" style="left:782px;top:573px;width:55px;overflow:hidden;height:14px"><span class="n" style="letter-spacing:0.00px;margin:0 -0.00px 0 0.00px">1</span><span class="l" style="width:21px"> ms</span></div>
<div class="t" style="left:885px;top:573px;">叠加相<span class="l" style="width:7px">:</span></div>
<div style="left:939px;top:569px;width:55px;height:21px;background:#fff;box-shadow:inset 1px 1px 0 #a0a0a0,inset -1px -1px 0 #fff,inset 2px 2px 0 #696969,inset -2px -2px 0 #e3e3e3"></div>
<div class="t" style="left:943px;top:574px;"><span class="l" style="width:14px">IA</span></div>
<div class="btn" style="left:976px;top:571px;width:17px;height:18px"><svg width="17" height="18" style="position:absolute;left:0;top:0" shape-rendering="crispEdges"><path d="M5 7h7v1h-1v1h-1v1h-1v1h-1v-1h-1v-1h-1v-1h-1z" fill="#000"/></svg></div>
<div class="gb" style="left:564px;top:629px;width:442px;height:110px"></div>
<div style="left:571px;top:622px;width:116px;height:16px;background:#f0f0f0"></div>
<div class="t" style="left:573px;top:623px;">变频变压参数设置</div>
<div style="left:1004px;top:655px;width:4px;height:18px;background:#f0f0f0"></div>
<i style="left:1005px;top:613px;width:1px;height:9px;background:#a0a0a0"></i>
<i style="left:1006px;top:613px;width:1px;height:9px;background:#696969"></i>
<div class="cb" style="left:575px;top:662px"></div>
<div class="t" style="left:593px;top:662px;">频率变</div>
<div class="t" style="left:656px;top:662px;"><span class="l" style="width:35px">df/dt</span></div>
<div style="left:699px;top:658px;width:59px;height:20px;background:#fff;box-shadow:inset 1px 1px 0 #a0a0a0,inset -1px -1px 0 #fff,inset 2px 2px 0 #696969,inset -2px -2px 0 #e3e3e3"></div>
<div class="t" style="left:701px;top:662px;width:55px;overflow:hidden;height:14px"><span class="n" style="letter-spacing:1.17px;margin:0 -0.58px 0 0.58px">1.0</span><span class="l" style="width:35px"> Hz/s</span></div>
<div class="t" style="left:774px;top:663px;">终值<span class="l" style="width:7px">:</span></div>
<div style="left:833px;top:656px;width:71px;height:20px;background:#fff;box-shadow:inset 1px 1px 0 #a0a0a0,inset -1px -1px 0 #fff,inset 2px 2px 0 #696969,inset -2px -2px 0 #e3e3e3"></div>
<div class="t" style="left:835px;top:660px;width:67px;overflow:hidden;height:14px"><span class="n" style="letter-spacing:0.50px;margin:0 -0.25px 0 0.25px">100.000</span><span class="l" style="width:21px"> Hz</span></div>
<div class="cb" style="left:575px;top:695px"></div>
<div class="t" style="left:593px;top:695px;">电压变</div>
<div class="t" style="left:656px;top:695px;"><span class="l" style="width:35px">dv/dt</span></div>
<div style="left:699px;top:691px;width:59px;height:20px;background:#fff;box-shadow:inset 1px 1px 0 #a0a0a0,inset -1px -1px 0 #fff,inset 2px 2px 0 #696969,inset -2px -2px 0 #e3e3e3"></div>
<div class="t" style="left:701px;top:695px;width:55px;overflow:hidden;height:14px"><span class="n" style="letter-spacing:1.17px;margin:0 -0.58px 0 0.58px">1.0</span><span class="l" style="width:28px"> v/s</span></div>
<div class="t" style="left:774px;top:696px;">终值<span class="l" style="width:7px">:</span></div>
<div style="left:833px;top:689px;width:71px;height:20px;background:#fff;box-shadow:inset 1px 1px 0 #a0a0a0,inset -1px -1px 0 #fff,inset 2px 2px 0 #696969,inset -2px -2px 0 #e3e3e3"></div>
<div class="t" style="left:835px;top:693px;width:67px;overflow:hidden;height:14px"><span class="n" style="letter-spacing:0.50px;margin:0 -0.25px 0 0.25px">100.000</span><span class="l" style="width:14px"> V</span></div>
<div class="t" style="left:927px;top:658px;">变量选择<span class="l" style="width:7px">:</span></div>
<div style="left:939px;top:682px;width:55px;height:21px;background:#fff;box-shadow:inset 1px 1px 0 #a0a0a0,inset -1px -1px 0 #fff,inset 2px 2px 0 #696969,inset -2px -2px 0 #e3e3e3"></div>
<div class="t" style="left:943px;top:687px;"><span class="l" style="width:14px">UA</span></div>
<div class="btn" style="left:976px;top:684px;width:17px;height:18px"><svg width="17" height="18" style="position:absolute;left:0;top:0" shape-rendering="crispEdges"><path d="M5 7h7v1h-1v1h-1v1h-1v1h-1v-1h-1v-1h-1v-1h-1z" fill="#000"/></svg></div>
<div style="left:0px;top:728px;width:1015px;height:8px;background:linear-gradient(90deg,#f3e1e4 0,#ece6e8 40px,#e9e9e9 100px,#e9e9e9 108px,#f5f5f5 109px,#f5f5f5 156px,#e9e9e9 157px,#e9e9e9 100%)"></div>
</div>
</body></html>
